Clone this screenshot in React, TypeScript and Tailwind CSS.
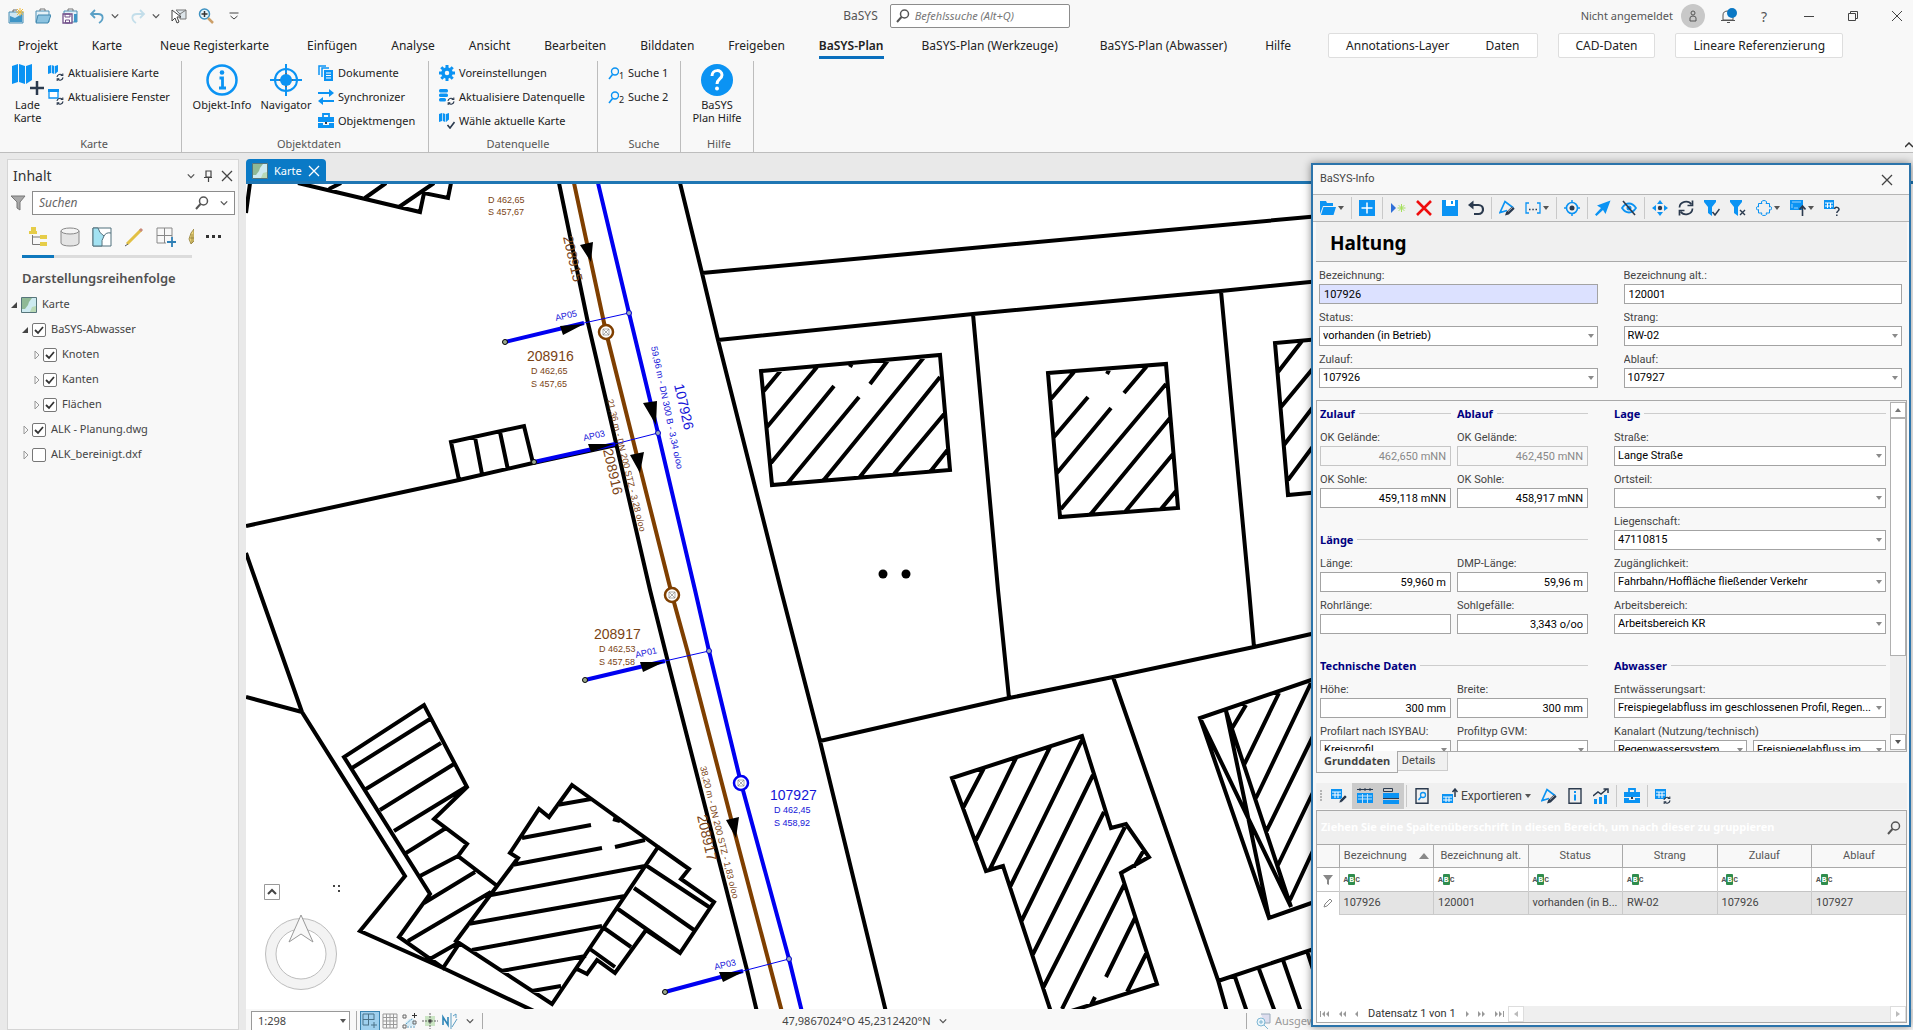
import { useId } from 'react';
import type { ReactNode } from 'react';
import clsx from 'clsx';

const BLUE = '#0b93f3';
const DARK = '#2b3a4e';

type IconProps = { children: ReactNode; size?: 'sm' | 'md' | 'lg'; box?: string };

function Icon({ children, size = 'sm', box = '0 0 16 16' }: IconProps) {
  return (
    <svg
      viewBox={box}
      fill="none"
      aria-hidden="true"
      className={clsx('shrink-0', size === 'sm' && 'size-4', size === 'md' && 'size-5', size === 'lg' && 'size-8')}
    >
      {children}
    </svg>
  );
}

/* ---------- shared icon parts ---------- */

const refreshMark = (
  <g stroke={DARK} strokeWidth="1.1">
    <path d="M9 12a3 3 0 0 1 5.2-1.8M15 12.4a3 3 0 0 1-5.2 1.8" />
    <path d="M14.8 8.4v2.1h-2.1M9.2 16v-2.1h2.1" />
  </g>
);

const mapMark = <path d="M0 1l3-1v8L0 9zM3.7 0L6.3 1v8L3.7 8zM7 1l3-1v6.500L7 9z" fill={BLUE} />;

const tableMark = (
  <g>
    <path d="M0 1h11v10H0z" fill={BLUE} />
    <path d="M1 4h9M1 7h9M4 4v6M7 4v6" stroke="#fff" strokeWidth="1" />
  </g>
);

function Caret() {
  return (
    <svg viewBox="0 0 6 4" className="h-1 w-1.5 shrink-0" aria-hidden="true">
      <path d="M0 0h6L3 4z" fill="#555" />
    </svg>
  );
}

function Chevron() {
  return (
    <svg viewBox="0 0 10 6" className="h-1.5 w-2 shrink-0" fill="none" aria-hidden="true">
      <path d="M1 1l4 4 4-4" stroke="#555" strokeWidth="1.600" />
    </svg>
  );
}

function Close({ color = '#444' }: { color?: string }) {
  return (
    <svg viewBox="0 0 12 12" className="size-3 shrink-0" fill="none" aria-hidden="true">
      <path d="M1 1l10 10M11 1L1 11" stroke={color} strokeWidth="1.300" />
    </svg>
  );
}

function Magnifier({ color = '#555' }: { color?: string }) {
  return (
    <Icon>
      <circle cx="9.500" cy="6" r="4" stroke={color} strokeWidth="1.500" />
      <path d="M6.500 9L2 14" stroke={color} strokeWidth="2" />
    </Icon>
  );
}

const icons = {
  newProject: (
    <Icon>
      <path d="M1 4h14v11H1z" fill="#cfe6f2" stroke="#4b8fb5" />
      <path d="M2 8l5 2 7-4v8H2z" fill="#3f95c6" />
      <path d="M5 4V2h4" stroke="#666" />
      <path d="M12 0v8M8 4h8M9 1l6 6M15 1L9 7" stroke="#f0b93a" />
    </Icon>
  ),
  openProject: (
    <Icon>
      <path d="M1 3h13v11H1z" fill="#e5f1f7" stroke="#4b8fb5" />
      <path d="M5 3V1h5v2" stroke="#777" />
      <path d="M3 7h13l-3 8H1z" fill="#8cc3e0" stroke="#3e86ae" />
    </Icon>
  ),
  saveProject: (
    <Icon>
      <path d="M2 3h13v11H2z" fill="#e5f1f7" stroke="#4b8fb5" />
      <path d="M6 3V1h5v2" stroke="#777" />
      <path d="M12 6h3v8h-3z" fill="#3f95c6" />
      <path d="M1 6h9v9H1z" fill="#fff" stroke="#72508a" strokeWidth="1.300" />
      <path d="M3 6h5v3H3zM3.500 12h4v3h-4z" stroke="#72508a" />
    </Icon>
  ),
  undo: (
    <Icon>
      <path d="M6 2L2 6l4 4M2 6h7c6 0 6 6 1 9" stroke="#5aa0c6" strokeWidth="1.800" />
    </Icon>
  ),
  redo: (
    <Icon>
      <path d="M10 2l4 4-4 4M14 6H7C1 6 1 12 6 15" stroke="#c3deea" strokeWidth="1.800" />
    </Icon>
  ),
  explore: (
    <Icon>
      <path d="M5 2h10v9H9" fill="#dde5ea" stroke="#777" />
      <path d="M5 2l4 4 6-4M9 6v5" stroke="#777" />
      <path d="M1 2v11l3-3 2 5 2-1-2-5h4z" fill="#fff" stroke="#444" />
    </Icon>
  ),
  zoomIn: (
    <Icon>
      <circle cx="6.500" cy="6" r="5" fill="#e6f4fb" stroke="#3d92c2" strokeWidth="1.500" />
      <path d="M6.500 3v6M3.500 6h6" stroke="#333" strokeWidth="1.500" />
      <path d="M10 10l5 5" stroke="#cda069" strokeWidth="2.500" />
    </Icon>
  ),
  loadMap: (
    <Icon size="lg" box="0 0 32 32">
      <path d="M0 2l6-2v18l-6 2zM7 0l6 2v18l-6-2zM14 2l6-2v16l-6 4z" fill={BLUE} />
      <path d="M25 17v14M18 24h14" stroke={DARK} strokeWidth="2.500" />
    </Icon>
  ),
  info: (
    <Icon size="lg" box="0 0 32 32">
      <circle cx="16" cy="16" r="14.500" stroke={BLUE} strokeWidth="2.500" />
      <circle cx="16" cy="8.500" r="2.300" fill={BLUE} />
      <path d="M13.500 14h3v10M13 24h7" stroke={BLUE} strokeWidth="2.800" />
    </Icon>
  ),
  navigator: (
    <Icon size="lg" box="0 0 32 32">
      <circle cx="16" cy="16" r="11" stroke={BLUE} strokeWidth="2" />
      <path d="M16 0v11M16 21v11M0 16h11M21 16h11" stroke={DARK} strokeWidth="1.500" />
      <path d="M16 0v9M16 23v9M0 16h9M23 16h9" stroke={BLUE} strokeWidth="2" />
      <circle cx="16" cy="16" r="6" fill={BLUE} />
    </Icon>
  ),
  help: (
    <Icon size="lg" box="0 0 32 32">
      <circle cx="16" cy="16" r="16" fill={BLUE} />
      <path d="M11 12c0-7 10-7 10-1 0 4-5 4-5 9" stroke="#fff" strokeWidth="3" />
      <circle cx="16" cy="24.500" r="2" fill="#fff" />
    </Icon>
  ),
  mapRefresh: <Icon>{mapMark}{refreshMark}</Icon>,
  windowRefresh: (
    <Icon>
      <path d="M1 1h9v8H1z" fill="#fff" stroke={BLUE} strokeWidth="1.300" />
      <path d="M0 0h11v3H0z" fill={BLUE} />
      {refreshMark}
    </Icon>
  ),
  documents: (
    <Icon>
      <path d="M1 10V1h7M4 12V3h7" stroke={BLUE} strokeWidth="1.500" />
      <path d="M6 5h9v11H6z" fill={BLUE} />
      <path d="M8 8h5M8 10.500h5M8 13h5" stroke="#fff" />
    </Icon>
  ),
  sync: (
    <Icon>
      <path d="M0 4h12M4 12h12" stroke={BLUE} strokeWidth="2" />
      <path d="M11 0l5 4-5 4zM5 8l-5 4 5 4z" fill={BLUE} />
    </Icon>
  ),
  briefcase: (
    <Icon>
      <path d="M5 4V1h6v3" stroke={BLUE} strokeWidth="1.800" />
      <path d="M0 4h16v5H0zM0 10h5v2h6v-2h5v5H0z" fill={BLUE} />
      <path d="M7 9h2v2H7z" fill={DARK} />
    </Icon>
  ),
  gear: (
    <Icon>
      <circle cx="8" cy="8" r="4" stroke={BLUE} strokeWidth="3.500" />
      <path d="M8 0v3M8 13v3M0 8h3M13 8h3M2.300 2.300l2 2M11.700 11.700l2 2M13.700 2.300l-2 2M4.300 11.700l-2 2" stroke={BLUE} strokeWidth="3" />
    </Icon>
  ),
  dbRefresh: (
    <Icon>
      <rect x="0" y="0" width="9" height="3.500" rx="1.500" fill={BLUE} />
      <rect x="0" y="4.500" width="9" height="3.500" rx="1.500" fill={BLUE} />
      <rect x="0" y="9" width="7" height="3.500" rx="1.500" fill={BLUE} />
      {refreshMark}
    </Icon>
  ),
  mapCheck: (
    <Icon>
      {mapMark}
      <path d="M8.500 12l2.500 3 4.500-6" stroke={DARK} strokeWidth="1.600" />
    </Icon>
  ),
  tableEdit: (
    <Icon>
      {tableMark}
      <path d="M8 15l1-3 5-5 2 2-5 5z" fill={DARK} stroke="#efefef" strokeWidth="0.500" />
    </Icon>
  ),
  tableRefresh: <Icon>{tableMark}{refreshMark}</Icon>,
  folder: (
    <Icon>
      <path d="M0 14V1h6l1 2h6v3H3z" fill={BLUE} />
      <path d="M3.500 7H16l-2.500 8H1z" fill={BLUE} />
    </Icon>
  ),
  add: (
    <Icon>
      <path d="M0 0h16v16H0z" fill={BLUE} />
      <path d="M8 2.500v11M2.500 8h11" stroke="#fff" strokeWidth="1.500" />
    </Icon>
  ),
  newRow: (
    <Icon>
      <path d="M1 3l5 5-5 5z" fill="#2f6fd8" />
      <path d="M11.500 4v8M7.500 8h8M8.700 5.200l5.600 5.600M14.300 5.200l-5.600 5.600" stroke="#a5e05c" />
    </Icon>
  ),
  remove: (
    <Icon>
      <path d="M1 1l14 14M15 1L1 15" stroke="#ef0d0d" strokeWidth="2.600" />
    </Icon>
  ),
  save: (
    <Icon>
      <path d="M0 0h16v16H0z" fill={BLUE} />
      <path d="M4 0h9v6H4z" fill="#fff" />
      <path d="M9 1h2v3H9z" fill={BLUE} />
    </Icon>
  ),
  back: (
    <Icon>
      <path d="M4 5h6.500a4.200 4.200 0 0 1 0 9H6" stroke={DARK} strokeWidth="2.200" />
      <path d="M0 5l5.500-4.500v9z" fill={DARK} />
    </Icon>
  ),
  edit: (
    <Icon>
      <path d="M14.500 8L6 1.500L1 12.500L8 10.500" stroke={BLUE} strokeWidth="1.700" />
      <path d="M6 15.500l1.200-3.500 6-5.500 2.500 2.300-6 5.700z" fill={DARK} />
      <path d="M9 11.500l4.500-4" stroke="#f0f0f0" strokeWidth="0.700" />
    </Icon>
  ),
  brackets: (
    <Icon>
      <path d="M4 3H1v10h3M12 3h3v10h-3" stroke={BLUE} strokeWidth="1.300" />
      <path d="M4 9.500h1.500M7.300 9.500h1.500M10.500 9.500H12" stroke={DARK} strokeWidth="1.500" />
    </Icon>
  ),
  target: (
    <Icon>
      <circle cx="8" cy="8" r="5.500" stroke={BLUE} strokeWidth="1.600" />
      <circle cx="8" cy="8" r="2.500" fill={DARK} />
      <path d="M8 0v3M8 13v3M0 8h3M13 8h3" stroke={BLUE} strokeWidth="1.500" />
    </Icon>
  ),
  arrow: (
    <Icon>
      <path d="M15.500.500L2 5.500l4 2.500-6 6.500L1.500 16 8 10l2.500 4z" fill={BLUE} />
    </Icon>
  ),
  hidden: (
    <Icon>
      <path d="M1 8c4-6 10-6 14 0-4 6-10 6-14 0z" stroke={BLUE} strokeWidth="1.800" />
      <circle cx="8" cy="8" r="2.500" fill={BLUE} />
      <path d="M2 1l12 14" stroke={DARK} strokeWidth="1.600" />
    </Icon>
  ),
  move: (
    <Icon>
      <path d="M8 0l3 4H5zM8 16l3-4H5zM0 8l4-3v6zM16 8l-4-3v6z" fill={BLUE} />
      <circle cx="8" cy="8" r="2.200" fill={DARK} />
    </Icon>
  ),
  refresh: (
    <Icon>
      <path d="M1.500 7.500a6.500 6 0 0 1 12-3M14.500 8.500a6.500 6 0 0 1-12 3" stroke={DARK} strokeWidth="1.700" />
      <path d="M14.500.500v5h-5M1.500 15.500v-5h5" stroke={DARK} strokeWidth="1.700" />
    </Icon>
  ),
  filterCheck: (
    <Icon>
      <path d="M0 0h12v2L8 7v9l-4-3V7L0 2z" fill={BLUE} />
      <path d="M8.500 12l2.500 3 4.500-6" stroke={DARK} strokeWidth="1.500" />
    </Icon>
  ),
  filterClear: (
    <Icon>
      <path d="M0 0h12v2L8 7v9l-4-3V7L0 2z" fill={BLUE} />
      <path d="M10 10l5 5M15 10l-5 5" stroke={DARK} strokeWidth="1.400" />
    </Icon>
  ),
  puzzle: (
    <Icon>
      <path
        d="M2.500 3.500H6l-.700-1.500q.700-1.500 2.700-1.500T10.700 2L10 3.500h3.500V7l1.200-.500q.800.300.800 1.700t-.800 1.800L13.500 9.500V13H10l.700 1.300q-.700 1.200-2.700 1.200t-2.700-1.200L6 13H2.500V9.500L1.300 10Q.500 9.600.500 8.200T1.300 6.500L2.500 7z"
        stroke={BLUE}
        strokeWidth="1"
      />
    </Icon>
  ),
  layoutUp: (
    <Icon>
      <path d="M0 0h13v10H0z" fill={BLUE} />
      <path d="M2 2h9M2 4v4M4 8h4" stroke="#9bd3fb" />
      <path d="M12.500 16V6M9.500 9.500l3-3.500 3 3.500" stroke={DARK} strokeWidth="1.600" />
    </Icon>
  ),
  tableHelp: (
    <Icon>
      <path d="M0 0h10v9H0z" fill={BLUE} />
      <path d="M1 3h8M1 6h8M3.500 3v5M6.500 3v5" stroke="#fff" />
      <path d="M10.500 9c.500-2.500 4.500-2 4.500.500 0 1.500-2.200 1.500-2.200 3.500M12.800 14.500V16" stroke={DARK} strokeWidth="1.500" />
    </Icon>
  ),
  headerRow: (
    <Icon>
      <path d="M0 5h16v10H0z" fill={BLUE} />
      <path d="M0 1.500h16M3 0v3M8 0v3M13 0v3" stroke={DARK} />
      <path d="M1 8h14M1 11h14M5.500 6v9M10.500 6v9" stroke="#bfe1fa" />
    </Icon>
  ),
  rowSelect: (
    <Icon>
      <path d="M.500.500h9v3h-9z" stroke={DARK} />
      <path d="M0 5h16v5H0zM0 12h16v4H0z" fill={BLUE} />
      <path d="M0 10.500h16" stroke={DARK} />
    </Icon>
  ),
  preview: (
    <Icon>
      <path d="M2 .700h12v14.600H2z" stroke={DARK} strokeWidth="1.400" />
      <circle cx="9" cy="7" r="2.500" stroke={BLUE} strokeWidth="1.300" />
      <path d="M7 9l-2.500 3" stroke={BLUE} strokeWidth="1.500" />
    </Icon>
  ),
  tableExport: (
    <Icon>
      <path d="M0 6h11v9H0z" fill={BLUE} />
      <path d="M1 9h9M1 12h9M4 9v5M7 9v5" stroke="#fff" />
      <path d="M13 9V1M10.500 4L13 1l2.500 3" stroke={DARK} strokeWidth="1.500" />
    </Icon>
  ),
  infoBox: (
    <Icon>
      <path d="M2 .700h12v14.600H2z" stroke={DARK} strokeWidth="1.400" />
      <path d="M8 3v2M8 6.500v6" stroke={BLUE} strokeWidth="2" />
    </Icon>
  ),
  chart: (
    <Icon>
      <path d="M1 11h3v5H1zM6 9h3v7H6zM11 7h3v9h-3z" fill={BLUE} />
      <path d="M0 8l5-4 3 2 6-5M10.500 1H15v4" stroke={DARK} strokeWidth="1.500" />
    </Icon>
  ),
};

function SearchNo({ no }: { no: string }) {
  return (
    <span className="flex w-4 shrink-0 items-end">
      <svg viewBox="0 0 11 14" className="h-3.5 w-[11px] shrink-0" fill="none" aria-hidden="true">
        <circle cx="7" cy="4.500" r="3.500" stroke={BLUE} strokeWidth="1.400" />
        <path d="M4.500 7.500L1 12" stroke={BLUE} strokeWidth="1.600" />
      </svg>
      <span className="mt-1.5 text-[9px] leading-[10px]">{no}</span>
    </span>
  );
}

/* ---------- title bar and ribbon ---------- */

function TitleBar() {
  return (
    <header className="flex h-8 shrink-0 items-center pl-2 pr-2 text-[#555]">
      <div className="flex flex-1 items-center gap-[11px]">
        <button aria-label="Neues Projekt">{icons.newProject}</button>
        <button aria-label="Projekt öffnen">{icons.openProject}</button>
        <button aria-label="Projekt speichern">{icons.saveProject}</button>
        <button aria-label="Rückgängig" className="flex items-center gap-1.5">{icons.undo}<Chevron /></button>
        <button aria-label="Wiederholen" className="flex items-center gap-1.5">{icons.redo}<Chevron /></button>
        <button aria-label="Erkunden">{icons.explore}</button>
        <button aria-label="Vergrößern">{icons.zoomIn}</button>
        <button aria-label="Symbolleiste anpassen" className="ml-1">
          <svg viewBox="0 0 9 8" className="h-2 w-2.5" fill="none"><path d="M0 1h9M1 4l3.500 3L8 4" stroke="#444" /></svg>
        </button>
      </div>
      <span className="mr-3 text-[12px]">BaSYS</span>
      <label className="flex h-6 w-[180px] items-center gap-1 rounded-xs border border-[#8c8c8c] bg-white px-1">
        <Magnifier />
        <input aria-label="Befehlssuche" placeholder="Befehlssuche (Alt+Q)" className="w-full text-[11px] italic outline-none placeholder:text-[#777]" />
      </label>
      <div className="flex flex-1 items-center justify-end text-[11px]">
        <span className="mr-2">Nicht angemeldet</span>
        <button aria-label="Konto" className="flex size-6 items-center justify-center rounded-full bg-[#c8c8c8]">
          <svg viewBox="0 0 8 12" className="h-3 w-2" fill="none"><circle cx="4" cy="3" r="2" stroke="#555" /><path d="M1 11V8q0-2 3-2t3 2v3z" stroke="#555" /></svg>
        </button>
        <button aria-label="Benachrichtigungen" className="ml-4">
          <Icon>
            <path d="M2 12V7q0-4 5-4t5 4v5zM0 12.500h14M6 14.500h3" stroke="#555" />
            <circle cx="11" cy="5" r="5" fill="#0a78c4" />
          </Icon>
        </button>
        <button aria-label="Hilfe" className="ml-6 text-[14px]">?</button>
        <button aria-label="Minimieren" className="ml-[34px]"><Icon><path d="M3 8.500h10" stroke="#444" /></Icon></button>
        <button aria-label="Wiederherstellen" className="ml-7"><Icon><path d="M3.500 5.500h7v7h-7zM5.500 5V3.500h7v7H11" stroke="#444" /></Icon></button>
        <button aria-label="Schließen" className="ml-7"><Icon><path d="M3 3l10 10M13 3L3 13" stroke="#444" /></Icon></button>
      </div>
    </header>
  );
}

const ribbonTabs = [
  'Projekt', 'Karte', 'Neue Registerkarte', 'Einfügen', 'Analyse', 'Ansicht', 'Bearbeiten', 'Bilddaten',
  'Freigeben', 'BaSYS-Plan', 'BaSYS-Plan (Werkzeuge)', 'BaSYS-Plan (Abwasser)', 'Hilfe',
];
const contextTabs = [['Annotations-Layer', 'Daten'], ['CAD-Daten'], ['Lineare Referenzierung']];

function RibbonTabs() {
  return (
    <nav className="flex h-[27px] shrink-0 items-center pl-px text-[12px] text-[#222]">
      {ribbonTabs.map((tab) => (
        <button key={tab} className={tab.includes(' ') ? 'px-[21px]' : 'px-[17px]'}>
          <span className={clsx('block border-b-3 pt-1 leading-5', tab === 'BaSYS-Plan' ? 'border-[#0a6fbd] font-semibold' : 'border-transparent')}>
            {tab}
          </span>
        </button>
      ))}
      <div className="ml-5 flex gap-5">
        {contextTabs.map((group) => (
          <div key={group[0]} className="flex h-[25px] items-center gap-9 rounded-xs border border-[#dedede] bg-white px-[17px]">
            {group.map((tab) => <button key={tab}>{tab}</button>)}
          </div>
        ))}
      </div>
    </nav>
  );
}

function BigButton({ icon, lines, className }: { icon: ReactNode; lines: string[]; className?: string }) {
  return (
    <button className={clsx('flex flex-col items-center gap-0.5 pt-[3px] leading-[13px]', className)}>
      {icon}
      <span>{lines.map((l) => <span key={l} className="block whitespace-nowrap">{l}</span>)}</span>
    </button>
  );
}

function SmallButtons({ items }: { items: [ReactNode, string][] }) {
  return (
    <div className="flex flex-col">
      {items.map(([icon, text]) => (
        <button key={text} className="flex h-6 items-center gap-1 whitespace-nowrap">{icon}{text}</button>
      ))}
    </div>
  );
}

function RibbonGroup({ title, className, children }: { title: string; className: string; children: ReactNode }) {
  return (
    <section className={clsx('flex h-[91px] flex-col justify-between border-r border-[#bdbdbd]', className)}>
      <div className="flex">{children}</div>
      <h2 className="text-center leading-4 text-[#555]">{title}</h2>
    </section>
  );
}

function Ribbon() {
  return (
    <div className="flex h-[94px] shrink-0 items-start border-b border-[#bdbdbd] pt-0.5 text-[11px] text-[#222]">
      <RibbonGroup title="Karte" className="w-[182px] pl-[7px]">
        <BigButton icon={icons.loadMap} lines={['Lade', 'Karte']} className="w-[41px]" />
        <SmallButtons items={[[icons.mapRefresh, 'Aktualisiere Karte'], [icons.windowRefresh, 'Aktualisiere Fenster']]} />
      </RibbonGroup>
      <RibbonGroup title="Objektdaten" className="w-[247px] pl-2">
        <BigButton icon={icons.info} lines={['Objekt-Info']} className="w-16" />
        <BigButton icon={icons.navigator} lines={['Navigator']} className="w-16" />
        <SmallButtons items={[[icons.documents, 'Dokumente'], [icons.sync, 'Synchronizer'], [icons.briefcase, 'Objektmengen']]} />
      </RibbonGroup>
      <RibbonGroup title="Datenquelle" className="w-[169px] pl-2.5">
        <SmallButtons items={[[icons.gear, 'Voreinstellungen'], [icons.dbRefresh, 'Aktualisiere Datenquelle'], [icons.mapCheck, 'Wähle aktuelle Karte']]} />
      </RibbonGroup>
      <RibbonGroup title="Suche" className="w-[83px] pl-2.5">
        <SmallButtons items={[[<SearchNo no="1" />, 'Suche 1'], [<SearchNo no="2" />, 'Suche 2']]} />
      </RibbonGroup>
      <RibbonGroup title="Hilfe" className="w-[73px] pl-1">
        <BigButton icon={icons.help} lines={['BaSYS', 'Plan Hilfe']} className="w-16" />
      </RibbonGroup>
      <button aria-label="Menüband reduzieren" className="mb-1 ml-auto self-end">
        <svg viewBox="0 0 8 6" className="h-1.5 w-2" fill="none"><path d="M0 5l4-4 4 4" stroke="#333" strokeWidth="1.500" /></svg>
      </button>
    </div>
  );
}

/* ---------- contents pane ---------- */

type Layer = { name: string; indent: string; open: boolean; checked: boolean };

const layers: Layer[] = [
  { name: 'BaSYS-Abwasser', indent: 'pl-[11px]', open: true, checked: true },
  { name: 'Knoten', indent: 'pl-[22px]', open: false, checked: true },
  { name: 'Kanten', indent: 'pl-[22px]', open: false, checked: true },
  { name: 'Flächen', indent: 'pl-[22px]', open: false, checked: true },
  { name: 'ALK - Planung.dwg', indent: 'pl-[11px]', open: false, checked: true },
  { name: 'ALK_bereinigt.dxf', indent: 'pl-[11px]', open: false, checked: false },
];

function Twisty({ open }: { open: boolean }) {
  return (
    <svg viewBox="0 0 8 8" className="size-2 shrink-0" fill="none" aria-hidden="true">
      {open ? <path d="M7 1v6H1z" fill="#444" /> : <path d="M3 0l4 4-4 4z" stroke="#999" />}
    </svg>
  );
}

function MapThumb() {
  return (
    <Icon>
      <path d="M.500.500h15v15H.500z" fill="#cdeaf0" stroke="#56757a" />
      <path d="M1 1h10l-3 4-1 3-3 4H1z" fill="#8fb996" />
      <path d="M9 15l2-5 4-1v6z" fill="#b9d9b5" />
    </Icon>
  );
}

function ContentsPane() {
  return (
    <aside className="flex w-[232px] shrink-0 flex-col border border-[#d5d5d5] bg-[#f8f8f8] pl-0.5 text-[#444]">
      <div className="flex h-[31px] items-center gap-2 pl-[3px] pr-[5px]">
        <h2 className="flex-1 text-[14px] text-[#333]">Inhalt</h2>
        <Chevron />
        <svg viewBox="0 0 10 12" className="h-3 w-2.5" fill="none"><path d="M3 1h5v6H3zM1 7.500h8M5.500 8v4" stroke="#444" strokeWidth="1.200" /></svg>
        <button aria-label="Bereich schließen"><Close /></button>
      </div>
      <div className="flex items-center gap-1.5 pr-[3px]">
        <Icon><path d="M1 1h14L10 7v8l-3-2V7z" fill="#a8a8a8" stroke="#777" /></Icon>
        <label className="flex h-6 flex-1 items-center border border-[#8c8c8c] bg-white px-1.5">
          <input aria-label="Suchen" placeholder="Suchen" className="w-full min-w-0 text-[12px] italic outline-none placeholder:text-[#666]" />
          <Magnifier />
          <span className="ml-2.5"><Chevron /></span>
        </label>
      </div>
      <div className="mt-1.5 flex h-8 items-center gap-3 pl-[18px]">
        <Icon size="md" box="0 0 20 20">
          <path d="M3 0h5v4H3zM1 4h8v3H1zM12 8h7v4h-7zM12 15h7v4h-7z" fill="#e6cd49" />
          <path d="M4.500 8v9.500H12M4.500 10H12" stroke="#777" />
        </Icon>
        <Icon size="md" box="0 0 20 20">
          <path d="M1 4v12c0 4 18 4 18 0V4" fill="#e4e4e4" stroke="#888" />
          <ellipse cx="10" cy="4" rx="9" ry="3" fill="#f4f4f4" stroke="#888" />
        </Icon>
        <Icon size="md" box="0 0 20 20">
          <path d="M1 1h18v18H1z" fill="#fff" stroke="#50707c" />
          <path d="M1 1h5q1 5 6 8-3 4-2 10H1z" fill="#a3e2f2" stroke="#50707c" />
          <path d="M12 9q2-4 7-3" stroke="#50707c" />
        </Icon>
        <Icon size="md" box="0 0 20 20">
          <path d="M3 17L17 3" stroke="#e2c044" strokeWidth="3" />
          <path d="M16 4l2-2" stroke="#c98a7a" strokeWidth="3" />
          <path d="M1 19l3-2" stroke="#555" />
        </Icon>
        <Icon size="md" box="0 0 20 20">
          <path d="M1 1h15v9M1 1v15h9M8.500 1v15M1 8.500h15" stroke="#888" />
          <path d="M16 10v10M11 15h10" stroke="#2f7fb5" strokeWidth="1.800" />
        </Icon>
        <svg viewBox="0 0 6 16" className="h-4 w-1.5 shrink-0" fill="none"><path d="M6 0L3 4 1 10l2 5 3-3z" fill="#ecd67c" stroke="#8d7a33" strokeWidth="0.800" /><path d="M2 9h4M4 5v9" stroke="#8d7a33" strokeWidth="0.800" /></svg>
        <svg viewBox="0 0 16 4" className="h-1 w-4 shrink-0"><path d="M0 0h3v3H0zM6 0h3v3H6zM12 0h3v3h-3z" fill="#333" /></svg>
      </div>
      <div className="ml-3 mr-[46px] mt-0.5 h-[3px] bg-[#dcdcdc]"><div className="h-full w-8 bg-[#0f78bd]" /></div>
      <h3 className="mt-2.5 pl-3 text-[13px] font-semibold leading-5 text-[#505050]">Darstellungsreihenfolge</h3>
      <div className="mt-1 text-[11px]">
        <div className="flex h-[25px] items-center gap-[3px]"><Twisty open /><MapThumb /><span className="pl-0.5">Karte</span></div>
        {layers.map((l) => (
          <label key={l.name} className={clsx('flex h-[25px] items-center gap-[3px]', l.indent)}>
            <Twisty open={l.open} />
            <span className="grid size-3.5 shrink-0 place-items-center">
              <input type="checkbox" defaultChecked={l.checked} className="peer col-start-1 row-start-1 size-3.5 appearance-none rounded-xs border border-[#777] bg-white" />
              <svg viewBox="0 0 10 10" className="col-start-1 row-start-1 hidden size-2.5 peer-checked:block" fill="none">
                <path d="M1 5l3 3 5-6" stroke="#333" strokeWidth="1.800" />
              </svg>
            </span>
            <span className="pl-0.5">{l.name}</span>
          </label>
        ))}
      </div>
    </aside>
  );
}

/* ---------- map ---------- */

const parcels = [
  'M250 183L246 213',
  'M559 183L588 323L616 443L650 590L668 662L747 970L757 1012',
  'M680 183L702 273L718 340L781 590L820 741L886 1012',
  'M702 273L1320 216',
  'M718 340L973 314L1221 291L1320 281',
  'M973 314L998 590L1009 698',
  'M1221 291L1249 590L1254 647',
  'M820 741L1009 698L1113 677L1254 647L1320 632',
  'M1113 677L1218 980L1227 1012',
  'M1218 981L1320 947',
  'M246 526L459 480L533 463L616 445',
  'M246 553L259 590L302 712L405 876L360 931L443 968L536 1012',
  'M246 697L302 712',
];

const buildings = [
  'M298 183L420 212L424 193L448 198L451 183',
  'M459 480L451 442L524 426L533 463',
  'M761 371L940 355L950 470L772 485Z',
  'M1048 373L1166 364L1178 508L1060 517Z',
  'M1320 339L1275 343L1288 495L1320 492',
  'M1051 1012L1003 866L986 871L952 778L1082 736L1111 828L1126 824L1149 857L1121 873L1157 984L1068 1012',
  'M1320 677L1200 718L1269 918L1320 900M1226 711L1291 907M1200 718L1291 907M1226 711L1269 918',
  'M496 885L458 856L467 844L434 819L467 787L424 705L344 757L430 894L399 937L443 968L459 944',
  'M572 785L658 847L552 1004L456 941L518 858L510 853L539 809L549 817Z',
  'M658 847L689 869L681 879L714 902L680 953L646 930L615 973L597 960L587 974L577 969',
];

const hatches = [
  'M341 183L329 189M386 183L365 198M434 183L399 207',
  'M475 437L482 474M500 432L508 470',
  'M782 369L763 392M817 367L767 427M834 386L771 463M859 397L787 484M889 359L870 384M925 356L823 481M940 377L859 478M945 413L894 474M949 448L930 472M852 363L850 367',
  'M1074 372L1050 400M1088 397L1054 437M1111 408L1057 473M1147 366L1124 393M1166 384L1061 509M1170 418L1090 515M1173 454L1125 512M1176 491L1161 509M1109 370L1107 374',
  'M1302 341L1278 372M1320 360L1281 407M1320 398L1284 445M1320 437L1288 480',
  'M984 768L963 808M1016 758L976 840M1050 747L990 869M1082 740L1010 887M1093 775L1021 922M1104 812L1032 956M1125 827L1043 988M1144 850L1134 867M1124 885L1062 1009M1135 918L1106 977M1147 952L1127 992M1095 997L1091 1005',
  'M1246 705L1231 730M1279 693L1244 765M1311 683L1256 798M1318 726L1266 832M1318 782L1278 865M1318 840L1290 900',
  'M1235 977L1247 1012M1259 969L1275 1012M1283 960L1301 1012M1307 951L1318 985',
  'M430 719L352 768M441 743L366 789M454 764L380 810M466 787L394 831M446 828L406 853M458 856L420 876M475 872L424 903M491 892L408 941M458 943L430 959',
  'M591 799L557 805M591 825L522 838M602 848L512 865M615 847L645 840M613 819L620 821M645 866L491 895M625 896L468 924M602 926L472 950M586 956L501 971M561 986L532 991',
  'M647 866L709 907M634 888L694 930M618 909L679 952M604 928L631 947M590 949L615 967',
];

const laterals = [
  { from: [505, 342], mid: [584, 323], to: [629, 313] },
  { from: [534, 462], mid: [615, 444], to: [658, 433] },
  { from: [585, 680], mid: [665, 661], to: [709, 651] },
  { from: [665, 992], mid: [743, 971], to: [789, 959] },
];

const arrows = [
  'M580 245L593 242L591 262Z', 'M630 455L644 452L640 473Z', 'M726 820L739 817L736 838Z', 'M643 403L657 401L656 425Z',
  'M560 326L563 335L584 324Z', 'M588 444L591 452L614 444Z', 'M640 662L643 672L664 662Z', 'M719 972L723 982L743 972Z',
];

type MapLabel = { t: string; x: number; y: number; big?: boolean; blue?: boolean; r?: number };

const mapLabels: MapLabel[] = [
  { t: 'D 462,65', x: 488, y: 203 },
  { t: 'S 457,67', x: 488, y: 215 },
  { t: '208916', x: 527, y: 361, big: true },
  { t: 'D 462,65', x: 531, y: 374 },
  { t: 'S 457,65', x: 531, y: 387 },
  { t: '208917', x: 594, y: 639, big: true },
  { t: 'D 462,53', x: 599, y: 652 },
  { t: 'S 457,58', x: 599, y: 665 },
  { t: '107927', x: 770, y: 800, big: true, blue: true },
  { t: 'D 462,45', x: 774, y: 813, blue: true },
  { t: 'S 458,92', x: 774, y: 826, blue: true },
  { t: 'AP05', x: 556, y: 321, blue: true, r: -13 },
  { t: 'AP03', x: 584, y: 441, blue: true, r: -13 },
  { t: 'AP01', x: 636, y: 658, blue: true, r: -13 },
  { t: 'AP03', x: 715, y: 970, blue: true, r: -13 },
  { t: '208915', x: 563, y: 237, big: true, r: 77 },
  { t: '208916', x: 603, y: 450, big: true, r: 77 },
  { t: '208917', x: 697, y: 816, big: true, r: 77 },
  { t: '107926', x: 674, y: 385, big: true, blue: true, r: 77 },
  { t: '59,96 m - DN 300 B - 3,34 o/oo', x: 651, y: 347, blue: true, r: 78 },
  { t: '21,36 m - DN 200 STZ - 3,28 o/oo', x: 607, y: 400, r: 76 },
  { t: '38,20 m - DN 200 STZ - 1,83 o/oo', x: 700, y: 767, r: 76 },
];

function Manhole({ x, y, color }: { x: number; y: number; color: string }) {
  return (
    <g>
      <circle cx={x} cy={y} r="7" fill="#fff" stroke={color} strokeWidth="2.500" />
      <path d={`M${x - 3} ${y - 3}h6v6h-6zl6 6m0-6l-6 6`} stroke="#888" strokeWidth="0.700" />
    </g>
  );
}

function MapCanvas() {
  return (
    <svg className="min-h-0 w-full flex-1 bg-white font-['Liberation_Sans',sans-serif]" fill="none" role="img" aria-label="Kanalplan">
      <g transform="translate(-246 -184)">
        <path d={[...parcels, ...buildings, ...hatches].join('')} stroke="#000" strokeWidth="4" />
        <circle cx="883" cy="574" r="4.500" fill="#000" />
        <circle cx="906" cy="574" r="4.500" fill="#000" />
        <path d="M574 183L606 332L638 460L672 595L688 653L734 830L782 1012" stroke="#7f3f00" strokeWidth="4" />
        <path d="M598 183L629 313L658 433L695 590L709 651L741 783L789 959L802 1012" stroke="#0000f0" strokeWidth="4" />
        {laterals.map(({ from, mid, to }) => (
          <g key={from.join()}>
            <path d={`M${from}L${mid}`} stroke="#0000f0" strokeWidth="4" />
            <path d={`M${mid}L${to}`} stroke="#0000f0" />
            <circle cx={from[0]} cy={from[1]} r="2.500" fill="#9aa88c" stroke="#000" />
            <circle cx={to[0]} cy={to[1]} r="2.500" fill="#9ab" stroke="#00c" />
          </g>
        ))}
        <path d={arrows.join('')} fill="#000" />
        <Manhole x={606} y={332} color="#7f3f00" />
        <Manhole x={672} y={595} color="#7f3f00" />
        <Manhole x={741} y={783} color="#0000f0" />
        {mapLabels.map((l) => (
          <text
            key={`${l.t}${l.x}`}
            fontSize={l.big ? 14 : 9}
            fill={l.blue ? '#1414d8' : '#7a4314'}
            transform={`translate(${l.x} ${l.y}) rotate(${l.r ?? 0})`}
          >
            {l.t}
          </text>
        ))}

        {/* compass widget */}
        <path d="M264.500 884.500h15v15h-15z" fill="#fff" stroke="#999" />
        <path d="M268 894l4-4 4 4" stroke="#444" strokeWidth="2" />
        <path d="M333 885h2v2h-2zM338 885h2v2h-2zM338 890h2v2h-2z" fill="#444" />
        <circle cx="301" cy="954" r="30" stroke="#f3f3f3" strokeWidth="11" />
        <circle cx="301" cy="954" r="35.500" stroke="#bdbdbd" />
        <circle cx="301" cy="954" r="25" fill="#fff" stroke="#bdbdbd" />
        <path d="M301 915l12 27-12-8-12 8z" fill="#f8f8f8" stroke="#999" />
      </g>
    </svg>
  );
}

function StatusBar() {
  return (
    <div className="flex h-[21px] shrink-0 items-center bg-[#f8f8f8] pl-[5px] pt-[3px] text-[11px] text-[#444]">
      <div className="grid items-center">
        <select aria-label="Maßstab" className="col-start-1 row-start-1 h-5 w-[99px] appearance-none border border-[#999] bg-white px-1.5 text-[11px] leading-4">
          <option>1:298</option>
        </select>
        <span className="pointer-events-none col-start-1 row-start-1 mr-1 justify-self-end"><Caret /></span>
      </div>
      <div className="ml-1.5 flex items-center gap-1 border-l border-[#aaa] pl-[3px]">
        <span className="-mr-0.5 flex size-5 items-center justify-center border border-[#3a84b0] bg-[#9fd0ee]">
          <Icon><path d="M1 1h11v6M1 1v11h6M6.500 1v11M1 6.500h11M12 9v6M9 12h6" stroke="#4a7288" /></Icon>
        </span>
        <Icon><path d="M1 1h14v14H1zM1 4.500h14M1 8h14M1 11.500h14M4.500 1v14M8 1v14M11.500 1v14" stroke="#999" /></Icon>
        <Icon>
          <path d="M3 10l4-4h5l2 7H5z" fill="#d4ebf6" />
          <path d="M1 2h3v3H1zM11 8h3v3h-3zM1 12h3v3H1z" stroke="#666" />
          <path d="M4 11l7-6M5 14h9" stroke="#5b9dc2" strokeDasharray="2 1" />
          <path d="M12.500 0v5M10 2.500h5" stroke="#333" />
        </Icon>
        <Icon><path d="M3 3h10v10H3z" fill="#cbe5c4" /><path d="M8 0v16M0 8h16" stroke="#666" strokeDasharray="2 1" /><path d="M6.500 6.500h3v3h-3z" fill="#444" /></Icon>
        <Icon>
          <path d="M1 12V4l5 8V4" stroke="#2f86b8" strokeWidth="1.600" />
          <path d="M9 0v16M10 14l5-8M11 3l3-2v4" stroke="#5b9dc2" />
        </Icon>
        <span className="ml-1"><Chevron /></span>
      </div>
      <span className="ml-2 h-4 w-px bg-[#aaa]" />
      <div className="flex flex-1 items-center justify-center gap-2">47,9867024°O 45,2312420°N<Chevron /></div>
      <div className="flex w-[667px] items-center gap-1 border-l border-[#aaa] pl-2 text-[#999]">
        <Icon><path d="M6 1h9v9H9" fill="#dde" stroke="#9ab" /><circle cx="6" cy="9" r="4" fill="#eaf5fb" stroke="#7fb6d3" /><path d="M6 7v4M4 9h4M9 12l4 4" stroke="#7fb6d3" /></Icon>
        Ausgewählt
      </div>
    </div>
  );
}

function MapView() {
  return (
    <main className="flex min-w-0 flex-1 flex-col">
      <div className="border-b-3 border-[#1f76b3]">
        <div className="flex h-[22px] w-20 items-center gap-1.5 rounded-t-sm bg-[#0a7ac6] px-1.5 pt-0.5 text-[11px] text-white">
          <MapThumb /><span className="flex-1">Karte</span>
          <button aria-label="Karte schließen"><Close color="#fff" /></button>
        </div>
      </div>
      <MapCanvas />
      <StatusBar />
    </main>
  );
}

/* ---------- BaSYS-Info dialog ---------- */

type FieldProps = { label: string; value?: string; right?: boolean; disabled?: boolean; marked?: boolean };

const labelStyle = 'block h-[22px] truncate pt-[5px] leading-[17px]';

function TextField({ label, value = '', right, disabled, marked }: FieldProps) {
  const id = useId();
  return (
    <div>
      <label htmlFor={id} className={labelStyle}>{label}</label>
      <input
        id={id}
        defaultValue={value}
        disabled={disabled}
        className={clsx(
          'h-5 w-full border px-1 text-[11px] leading-4 outline-none',
          right && 'text-right',
          disabled ? 'border-[#c6c6c6] bg-[#f8f8f8] text-[#888]' : 'border-[#a3a3a3] text-black',
          !disabled && (marked ? 'bg-[#dce1ff]' : 'bg-white'),
        )}
      />
    </div>
  );
}

function Select({ id, value, label }: { id?: string; value: string; label?: string }) {
  return (
    <div className="grid min-w-0 flex-1 items-center">
      <select id={id} aria-label={label} className="col-start-1 row-start-1 h-5 w-full appearance-none truncate border border-[#a3a3a3] bg-white pl-[3px] pr-2.5 text-[11px] leading-4 text-black outline-none">
        <option>{value}</option>
      </select>
      <svg viewBox="0 0 6 4" className="pointer-events-none col-start-1 row-start-1 mr-1 h-1 w-1.5 justify-self-end"><path d="M0 0h6L3 4z" fill="#8a8a8a" /></svg>
    </div>
  );
}

function SelectField({ label, value = '', second }: FieldProps & { second?: string }) {
  const id = useId();
  return (
    <div>
      <label htmlFor={id} className={labelStyle}>{label}</label>
      <div className="flex gap-1.5">
        <Select id={id} value={value} />
        {second && <Select value={second} label={`${label} 2`} />}
      </div>
    </div>
  );
}

function SectionHead({ title, className }: { title: string; className?: string }) {
  return (
    <div className={clsx('flex items-end', className)}>
      <h3 className="font-['Noto_Sans',sans-serif] text-[11px] font-bold leading-5 text-[#000080]">{title}</h3>
      <span className="mb-2.5 ml-1 h-px flex-1 bg-[#cdcdcd]" />
    </div>
  );
}

function Sep() {
  return <span className="mx-0.5 h-[22px] w-px shrink-0 bg-[#c9c9c9]" />;
}

type Tool = { name: string; icon: ReactNode; menu?: boolean; sep?: boolean };

const infoTools: Tool[] = [
  { name: 'Öffnen', icon: icons.folder, menu: true, sep: true },
  { name: 'Hinzufügen', icon: icons.add, sep: true },
  { name: 'Neuer Datensatz', icon: icons.newRow },
  { name: 'Löschen', icon: icons.remove },
  { name: 'Speichern', icon: icons.save },
  { name: 'Zurück', icon: icons.back, sep: true },
  { name: 'Bearbeiten', icon: icons.edit },
  { name: 'Felder', icon: icons.brackets, menu: true, sep: true },
  { name: 'Zentrieren', icon: icons.target, sep: true },
  { name: 'Auswählen', icon: icons.arrow },
  { name: 'Ausblenden', icon: icons.hidden, sep: true },
  { name: 'Verschieben', icon: icons.move },
  { name: 'Aktualisieren', icon: icons.refresh },
  { name: 'Filter anwenden', icon: icons.filterCheck },
  { name: 'Filter löschen', icon: icons.filterClear },
  { name: 'Erweiterungen', icon: icons.puzzle, menu: true },
  { name: 'Ansicht', icon: icons.layoutUp, menu: true },
  { name: 'Tabellenhilfe', icon: icons.tableHelp },
];

function InfoToolbar() {
  return (
    <div className="flex h-7 shrink-0 items-center border-y border-[#b5b5b5] bg-[#f0f0f0] pl-0.5">
      {infoTools.map((t) => (
        <div key={t.name} className="flex items-center">
          <button aria-label={t.name} className="flex h-6 items-center gap-0.5 px-[5px]">
            {t.icon}
            {t.menu && <Caret />}
          </button>
          {t.sep && <Sep />}
        </div>
      ))}
    </div>
  );
}

function DetailForm() {
  return (
    <div className="flex h-[352px] shrink-0 border border-[#a9a9a9] pl-[3px]">
      <div className="flex min-w-0 flex-1 gap-[26px] overflow-hidden">
        <div className="grid w-[268px] shrink-0 auto-rows-max grid-cols-2 gap-x-1.5">
          <SectionHead title="Zulauf" className="h-[23px]" />
          <SectionHead title="Ablauf" className="h-[23px]" />
          <TextField label="OK Gelände:" value="462,650 mNN" right disabled />
          <TextField label="OK Gelände:" value="462,450 mNN" right disabled />
          <TextField label="OK Sohle:" value="459,118 mNN" right />
          <TextField label="OK Sohle:" value="458,917 mNN" right />
          <SectionHead title="Länge" className="col-span-2 h-[42px]" />
          <TextField label="Länge:" value="59,960 m" right />
          <TextField label="DMP-Länge:" value="59,96 m" right />
          <TextField label="Rohrlänge:" />
          <TextField label="Sohlgefälle:" value="3,343 o/oo" right />
          <SectionHead title="Technische Daten" className="col-span-2 h-[42px]" />
          <TextField label="Höhe:" value="300 mm" right />
          <TextField label="Breite:" value="300 mm" right />
          <SelectField label="Profilart nach ISYBAU:" value="Kreisprofil" />
          <SelectField label="Profiltyp GVM:" />
        </div>
        <div className="min-w-0 flex-1">
          <SectionHead title="Lage" className="h-[23px]" />
          <SelectField label="Straße:" value="Lange Straße" />
          <SelectField label="Ortsteil:" />
          <SelectField label="Liegenschaft:" value="47110815" />
          <SelectField label="Zugänglichkeit:" value="Fahrbahn/Hoffläche fließender Verkehr" />
          <SelectField label="Arbeitsbereich:" value="Arbeitsbereich KR" />
          <SectionHead title="Abwasser" className="h-[42px]" />
          <SelectField label="Entwässerungsart:" value="Freispiegelabfluss im geschlossenen Profil, Regen..." />
          <SelectField label="Kanalart (Nutzung/technisch)" value="Regenwassersystem" second="Freispiegelabfluss im" />
        </div>
      </div>
      <div className="ml-1 flex w-4 flex-col bg-[#efefef] py-px">
        <button aria-label="Nach oben" className="flex h-4 items-center justify-center border border-[#b0b0b0] bg-white">
          <svg viewBox="0 0 6 4" className="h-1 w-1.5"><path d="M0 4h6L3 0z" fill="#777" /></svg>
        </button>
        <div className="h-[238px] border border-[#b0b0b0] bg-white" />
        <button aria-label="Nach unten" className="mt-auto flex h-4 items-center justify-center border border-[#b0b0b0] bg-white"><Caret /></button>
      </div>
    </div>
  );
}

function GridToolbar() {
  return (
    <div className="mt-2.5 flex h-[26px] shrink-0 items-center bg-[#f0f0f0] text-[12px] text-[#444]">
      <svg viewBox="0 0 2 12" className="ml-1 mr-1 h-3 w-0.5"><path d="M0 0h2v2H0zM0 3h2v2H0zM0 6h2v2H0zM0 9h2v2H0z" fill="#b5b5b5" /></svg>
      <button aria-label="Tabelle bearbeiten" className="px-[5px]">{icons.tableEdit}</button>
      <button aria-label="Kopfzeile" className="h-[26px] bg-[#cbcbcb] px-[5px]">{icons.headerRow}</button>
      <button aria-label="Zeilenauswahl" className="h-[26px] bg-[#cbcbcb] px-[5px]">{icons.rowSelect}</button>
      <Sep />
      <button aria-label="Vorschau" className="px-[5px]">{icons.preview}</button>
      <button className="ml-0.5 flex items-center gap-[3px] px-[5px]">{icons.tableExport}<span>Exportieren</span><Caret /></button>
      <button aria-label="Bearbeiten" className="px-[5px]">{icons.edit}</button>
      <button aria-label="Info" className="px-[5px]">{icons.infoBox}</button>
      <button aria-label="Diagramm" className="px-[5px]">{icons.chart}</button>
      <Sep />
      <button aria-label="Objektmengen" className="px-[5px]">{icons.briefcase}</button>
      <Sep />
      <button aria-label="Tabelle aktualisieren" className="px-[5px]">{icons.tableRefresh}</button>
    </div>
  );
}

const columns = ['Bezeichnung', 'Bezeichnung alt.', 'Status', 'Strang', 'Zulauf', 'Ablauf'];
const record = ['107926', '120001', 'vorhanden (in B...', 'RW-02', '107926', '107927'];

function RecordGrid() {
  return (
    <div className="mt-px flex min-h-0 flex-1 flex-col border border-[#a9a9a9] bg-white">
      <div className="flex h-[33px] shrink-0 items-center justify-between bg-[#efefef] pl-1 pr-1">
        <span className="font-['Noto_Sans',sans-serif] text-[11px] font-bold text-white">Ziehen Sie eine Spaltenüberschrift in diesen Bereich, um nach dieser zu gruppieren</span>
        <Magnifier />
      </div>
      <table className="w-full table-fixed border-collapse text-[#555]">
        <colgroup>
          <col className="w-[22px]" />
          {columns.map((c) => <col key={c} />)}
        </colgroup>
        <thead>
          <tr className="h-[23px] border-y border-[#a9a9a9] bg-[#f8f8f8]">
            <th />
            {columns.map((c, i) => (
              <th key={c} className="border-l border-[#a9a9a9] px-1 font-normal whitespace-nowrap">
                <span className="flex items-center justify-center gap-3">
                  {c}
                  {i === 0 && <svg viewBox="0 0 10 6" className="h-1.5 w-2.5"><path d="M0 6h10L5 0z" fill="#888" /></svg>}
                </span>
              </th>
            ))}
          </tr>
        </thead>
        <tbody>
          <tr className="h-6 border-b border-[#c4c4c4]">
            <td className="pl-1.5"><svg viewBox="0 0 10 10" className="size-2.5"><path d="M0 0h10L6 5v5L4 9V5z" fill="#888" /></svg></td>
            {columns.map((c) => (
              <td key={c} className="border-l border-[#d0d0d0] pl-1">
                <span className="flex h-3 items-center font-['Liberation_Mono',monospace] text-[8px] font-bold">
                  A<span className="rounded-[1px] bg-[#2f8d4d] px-px leading-[11px] text-white">B</span>C
                </span>
              </td>
            ))}
          </tr>
          <tr className="h-[23px]">
            <td className="pl-1.5"><svg viewBox="0 0 10 10" className="size-2.5" fill="none"><path d="M1 9l1-3 5-5 2 2-5 5z" stroke="#888" /></svg></td>
            {record.map((v, i) => (
              <td key={columns[i]} className="border-b border-l border-[#cacaca] bg-[#e4e4e4] pl-1 whitespace-nowrap text-[#444]">{v}</td>
            ))}
          </tr>
        </tbody>
      </table>
      <div className="mt-auto flex h-4 shrink-0 items-center gap-2.5 pl-[3px] text-[#333]">
        <RecordNav />
        <span>Datensatz 1 von 1</span>
        <RecordNav next />
        <div className="-ml-1.5 flex h-4 flex-1 items-center justify-between bg-[#efefef]">
          <button aria-label="Nach links" className="flex size-4 items-center justify-center border border-[#ddd] bg-white"><svg viewBox="0 0 4 6" className="h-1.5 w-1"><path d="M4 0v6L0 3z" fill="#bbb" /></svg></button>
          <button aria-label="Nach rechts" className="flex size-4 items-center justify-center border border-[#ddd] bg-white"><svg viewBox="0 0 4 6" className="h-1.5 w-1"><path d="M0 0v6l4-3z" fill="#bbb" /></svg></button>
        </div>
      </div>
    </div>
  );
}

function RecordNav({ next }: { next?: boolean }) {
  return (
    <svg viewBox="0 0 38 6" className={clsx('h-1.5 w-[38px] shrink-0', next && 'rotate-180')} aria-hidden="true">
      <path d="M0 0h1v6H0zM5 0v6L2 3zM9 0v6L6 3zM22 0v6l-3-3zM26 0v6l-3-3zM38 0v6l-3-3z" fill="#999" />
    </svg>
  );
}

function InfoDialog() {
  return (
    <section
      role="dialog"
      aria-label="BaSYS-Info"
      className="absolute bottom-[3px] right-0.5 top-[163px] flex w-[600px] flex-col border-2 border-[#2c74ab] bg-[#f8f8f8] font-[Roboto,sans-serif] text-[11px] text-[#444] shadow-[0_0_8px_rgba(0,0,0,0.45)]"
    >
      <div className="flex h-[29px] shrink-0 items-center justify-between pl-[7px] pr-4">
        <h2>BaSYS-Info</h2>
        <button aria-label="Schließen"><Close /></button>
      </div>
      <InfoToolbar />
      <div className="flex min-h-0 flex-1 flex-col pb-0.5 pl-[3px] pr-0.5">
        <h1 className="flex h-10 shrink-0 items-center border-b border-[#a9a9a9] bg-[#f0f0f0] pl-3.5 pt-[3px] font-['Noto_Sans',sans-serif] text-[19px] font-bold text-black">Haltung</h1>
        <div className="mb-3 grid shrink-0 grid-cols-2 gap-x-[26px] pl-[3px] pr-[5px]">
          <TextField label="Bezeichnung:" value="107926" marked />
          <TextField label="Bezeichnung alt.:" value="120001" />
          <SelectField label="Status:" value="vorhanden (in Betrieb)" />
          <SelectField label="Strang:" value="RW-02" />
          <SelectField label="Zulauf:" value="107926" />
          <SelectField label="Ablauf:" value="107927" />
        </div>
        <DetailForm />
        <div role="tablist" className="flex shrink-0 items-start">
          <button role="tab" aria-selected className="-mt-px h-[22px] border border-t-0 border-[#a9a9a9] bg-[#f8f8f8] px-[7px] font-['Noto_Sans',sans-serif] text-[11px] font-bold">Grunddaten</button>
          <button role="tab" className="h-[19px] w-[50px] border border-l-0 border-t-0 border-[#ccc] bg-[#f0f0f0] pr-2 text-[11px]">Details</button>
        </div>
        <GridToolbar />
        <RecordGrid />
      </div>
    </section>
  );
}

export default function App() {
  return (
    <div className="relative flex h-screen flex-col overflow-hidden bg-[#f8f8f8] font-['Noto_Sans',sans-serif]">
      <TitleBar />
      <RibbonTabs />
      <Ribbon />
      <div className="flex min-h-0 flex-1 gap-[7px] bg-[#e9e9e9] pl-[7px] pt-1.5">
        <ContentsPane />
        <MapView />
      </div>
      <InfoDialog />
    </div>
  );
}
